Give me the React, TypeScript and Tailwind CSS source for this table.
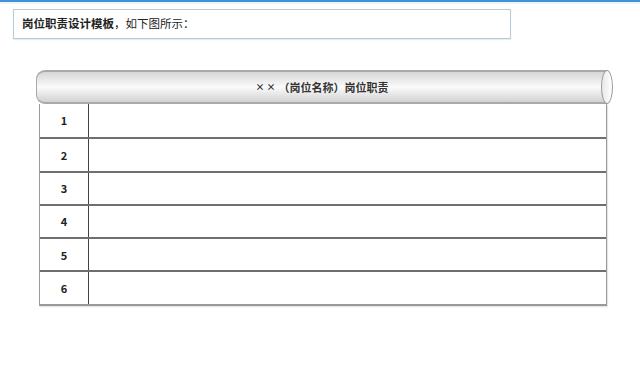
import React from 'react';

const rows = ['1', '2', '3', '4', '5', '6'];

const App: React.FC = () => {
  return (
    <div
      className="w-[640px] h-[372px] bg-white overflow-hidden"
      style={{ fontFamily: '"Noto Sans CJK SC", "Noto Sans", sans-serif' }}
    >
      {/* top accent line */}
      <div className="h-[2px] bg-[#3f93d8]" />
      <div className="h-[2px] bg-[#eef4f8]" />

      {/* caption box */}
      <div className="mt-[5px] ml-[13px] w-[498px] h-[30px] border border-[#b3ccd8] shadow-[0_1px_1px_rgba(0,0,0,0.08)] flex items-center pl-[8px] text-[11.5px] text-[#222]">
        <span className="font-bold">岗位职责设计模板</span>
        <span>，如下图所示：</span>
      </div>

      {/* table */}
      <div className="mt-[31px] ml-[36px] w-[577px]">
        {/* scroll header */}
        <div className="flex h-[34px]">
          <div className="flex-1 flex items-center justify-center rounded-l-[9px] border-y-2 border-l border-[#a9a9a9] bg-gradient-to-b from-[#d6d6d6] via-[#fbfbfb] to-[#d2d2d2] text-[11px] font-bold text-[#333]">
            <span className="text-[9px] text-[#333] mr-[1px] tracking-[2px]">××</span>
            （岗位名称）岗位职责
          </div>
          <div className="-ml-[6px] w-[12px] h-[34px] rounded-[50%] border border-[#999] bg-gradient-to-r from-[#e8e8e8] to-white" />
        </div>

        {/* body */}
        <div className="ml-[3px] w-[568px] border-x border-b-2 border-[#9a9a9a] shadow-[1px_1px_1px_rgba(0,0,0,0.1)]">
          {rows.map((n, i) => (
            <div
              key={n}
              className={`flex h-[33.3px] ${i > 0 ? 'border-t-2 border-[#6f6f6f]' : ''}`}
            >
              <div className="w-[49px] flex items-center justify-center border-r border-[#444] text-[11px] font-bold text-[#222]">
                {n}
              </div>
              <div className="flex-1" />
            </div>
          ))}
        </div>
      </div>
    </div>
  );
};

export default App;
